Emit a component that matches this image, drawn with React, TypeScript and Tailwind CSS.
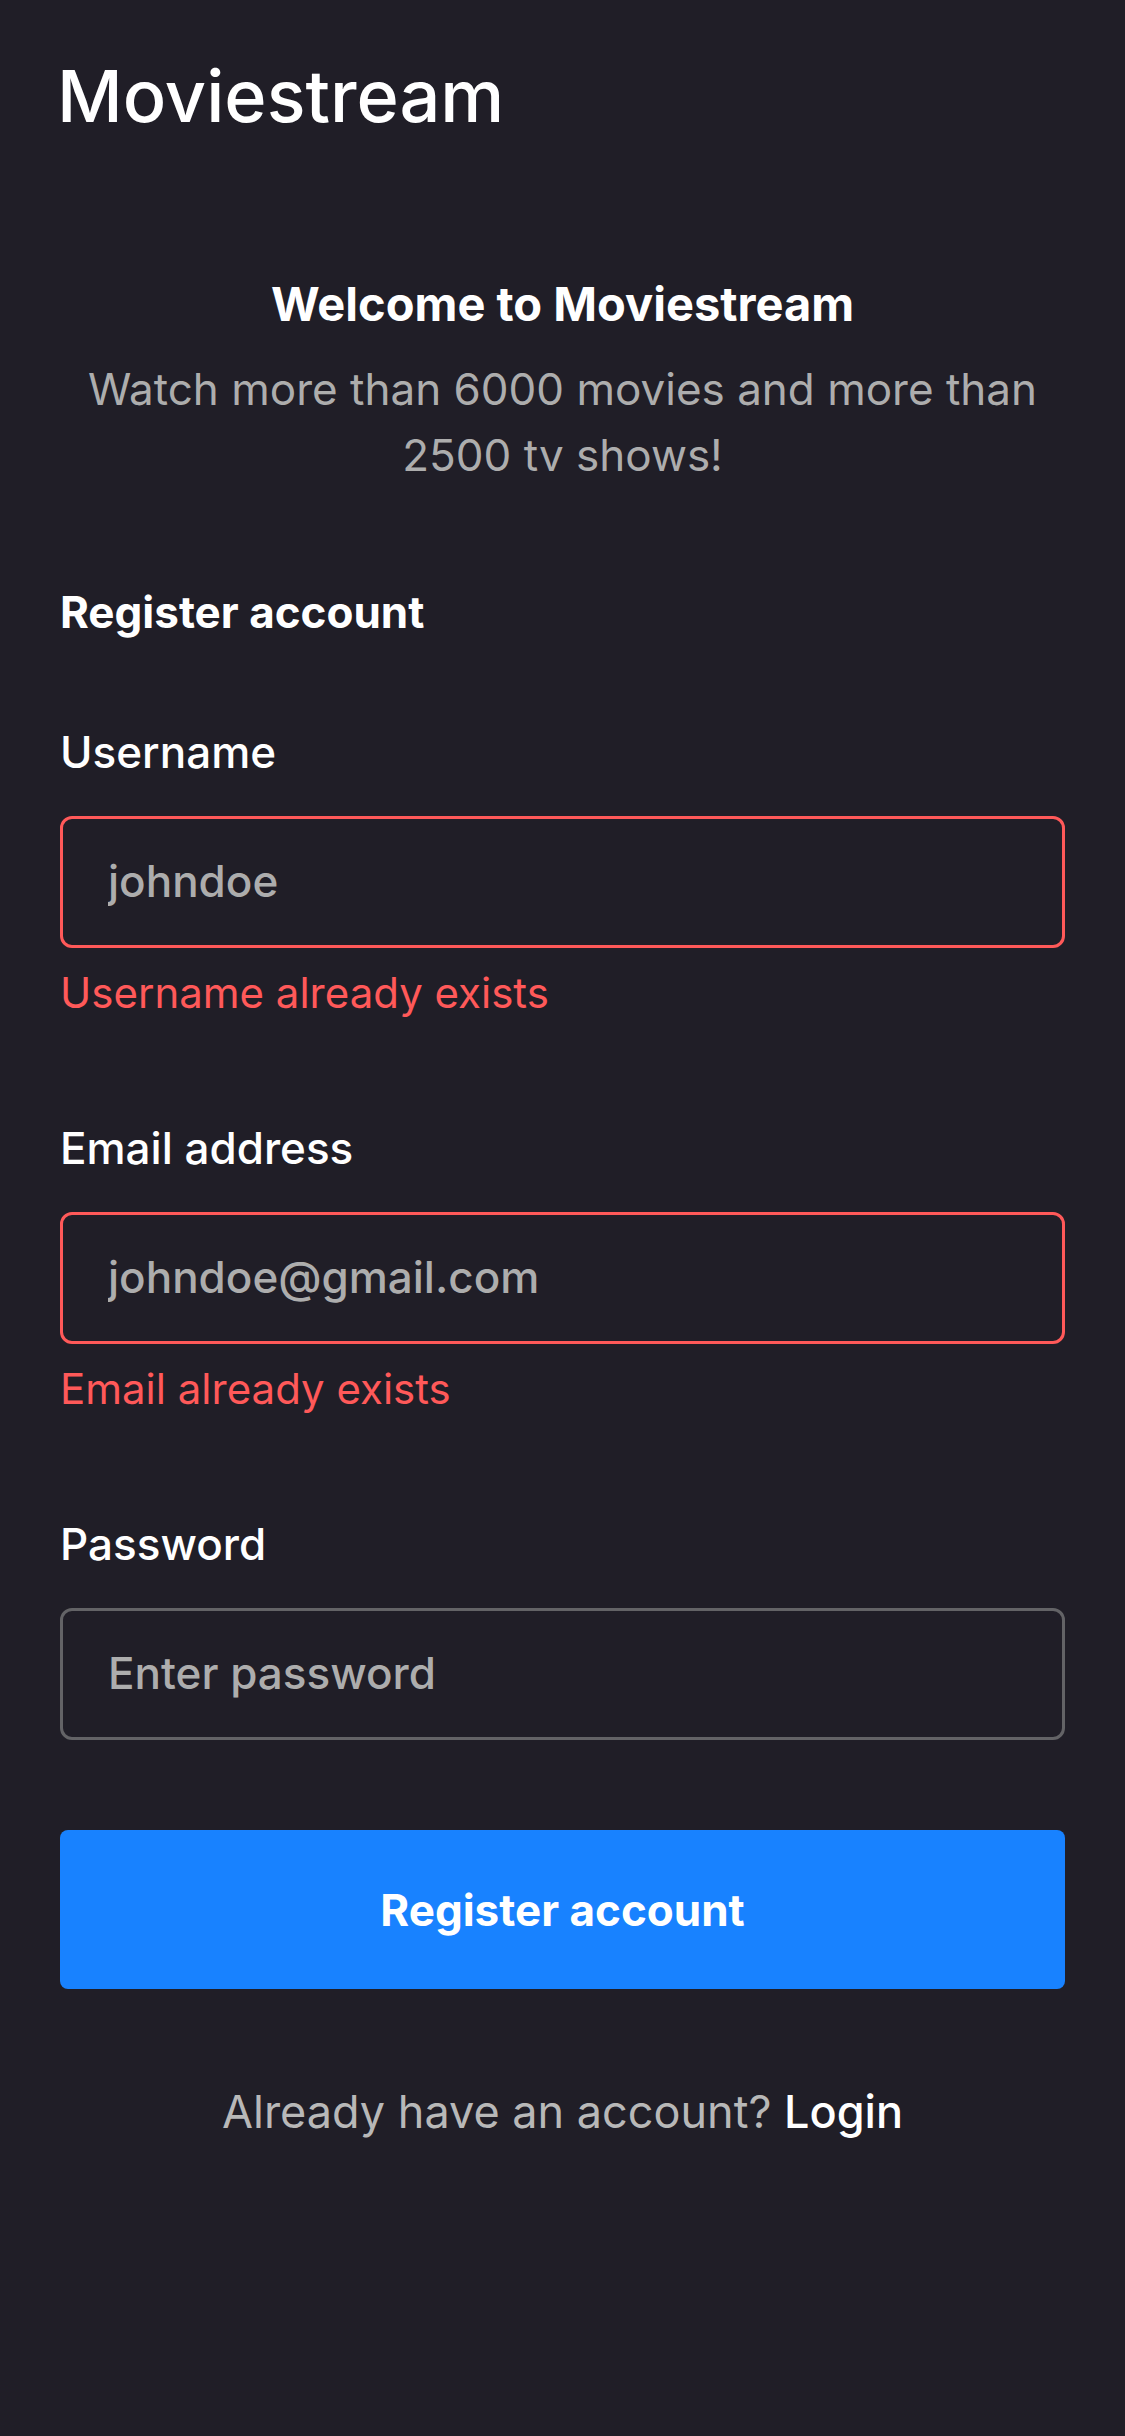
import React from 'react';

type FieldProps = {
  id: string;
  label: string;
  type: string;
  placeholder: string;
  error?: string;
};

function Field({ id, label, type, placeholder, error }: FieldProps) {
  return (
    <div className="flex flex-col">
      <label htmlFor={id} className="text-[44px] leading-[60px] font-medium text-white">
        {label}
      </label>
      <input
        id={id}
        type={type}
        placeholder={placeholder}
        aria-invalid={!!error}
        aria-describedby={error ? `${id}-error` : undefined}
        className={`mt-[34px] h-[132px] w-full rounded-xl border-3 bg-transparent px-[45px] pb-0.5 text-[44px] font-medium text-white outline-none placeholder:text-[#adadad] ${
          error ? 'border-[#ff5959]' : 'border-[#636366]'
        }`}
      />
      {error && (
        <p id={`${id}-error`} className="mt-4 text-[42px] leading-[58px] text-[#ff5959]">
          {error}
        </p>
      )}
    </div>
  );
}

export default function App() {
  return (
    <div className="min-h-screen bg-[#201e27] pt-12 pb-24 font-['Inter',sans-serif] text-white">
      <header className="px-[57px]">
        <h1 className="text-[72px] leading-[96px] font-medium">Moviestream</h1>
      </header>
      <main className="px-[60px]">
        <section className="mt-32 text-center">
          <h2 className="text-[47px] leading-[64px] font-bold">Welcome to Moviestream</h2>
          <p className="mt-5 text-[44px] leading-[66px] text-[#adadad]">
            Watch more than 6000 movies and more than 2500 tv shows!
          </p>
        </section>
        <form className="mt-[94px]" onSubmit={(e) => e.preventDefault()}>
          <h3 className="text-[44px] leading-[60px] font-bold">Register account</h3>
          <div className="mt-20 flex flex-col gap-24">
            <Field id="username" label="Username" type="text" placeholder="johndoe" error="Username already exists" />
            <Field id="email" label="Email address" type="email" placeholder="johndoe@gmail.com" error="Email already exists" />
            <Field id="password" label="Password" type="password" placeholder="Enter password" />
          </div>
          <button type="submit" className="mt-[90px] h-[159px] w-full rounded-lg bg-[#1882ff] text-[44px] font-bold">
            Register account
          </button>
        </form>
        <p className="mt-[90px] text-center text-[45px] leading-[66px] text-[#b8b8b8]">
          Already have an account?{' '}
          <a href="#login" className="font-medium text-white">
            Login
          </a>
        </p>
      </main>
    </div>
  );
}
